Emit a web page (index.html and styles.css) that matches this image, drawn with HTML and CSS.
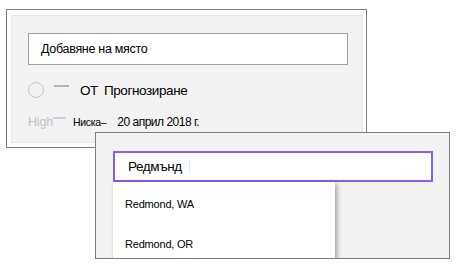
FILE: index.html
```html
<!DOCTYPE html>
<html lang="bg">
<head>
<meta charset="utf-8">
<title>Добавяне на място</title>
<link rel="stylesheet" href="styles.css">
</head>
<body>
<div class="stage">
    <div class="win winBack">
        <div class="winInner">
            <div class="field">Добавяне на място</div>
            <div class="rowMain">
                <span class="ring"></span>
                <span class="dash"></span>
                <span class="label">ОТ</span>
                <span class="label">Прогнозиране</span>
            </div>
            <div class="rowSub">
                <span class="high">High</span>
                <span class="dash dashSmall"></span>
                <span class="low">Ниска–</span>
                <span class="date">20 април 2018 г.</span>
            </div>
        </div>
    </div>

    <div class="win winFront">
        <div class="field fieldActive">Редмънд<span class="caret"></span></div>
        <ul class="menu">
            <li>Redmond, WA</li>
            <li>Redmond, OR</li>
        </ul>
    </div>
</div>
</body>
</html>
```

FILE: styles.css
```css
*{margin:0; padding:0; box-sizing:border-box;}
ul{list-style:none;}
body{background:#fff; font-family:"Liberation Sans", Arial, sans-serif; color:#000;}
.stage{position:relative; width:458px; height:273px; overflow:hidden;}

/* two overlapping dialog windows */
.win{position:absolute; border:1px solid #7d7d7d;}
.winBack{left:6px; top:9px; width:361px; height:139px; background:#fff; padding:5px 3px 4px 4px;}
.winInner{height:100%; background:#f3f3f3; border:1px solid #e6e6e6; padding:17px 0 0 16px;}
.winFront{left:95px; top:132px; width:355px; height:127px; background:#f3f3f3; padding:18px 0 0 17px; overflow:hidden;}

.field{width:320px; height:32px; background:#fff; border:1px solid #a0a0a0; padding:0 0 0 12px; font-size:12.5px; letter-spacing:-0.3px; line-height:30px;}
.fieldActive{height:31px; border:2px solid #8a5cf2; padding-left:13px; font-size:13.5px; letter-spacing:-0.4px; line-height:28px; display:flex; align-items:center;}
.caret{width:1px; height:14px; background:#d6eef5; margin-left:7px;}

.rowMain{display:flex; align-items:center; height:26px; margin-top:12px;}
.ring{width:16px; height:16px; border:1.5px solid #c4c4c4; border-radius:50%;}
.dash{width:15px; height:2px; background:#b4b4b4; margin:0 11px 9px 10px;}
.label{font-size:13.5px; letter-spacing:-0.4px; margin-right:6px;}

.rowSub{display:flex; align-items:center; margin-top:9px; height:20px;}
.high{font-size:12.5px; letter-spacing:-0.2px; color:#c2c2c2;}
.dashSmall{width:13px; margin:0 7px 8px 0; background:#d0d0d0;}
.low{font-size:10.5px; letter-spacing:-0.3px; margin-right:11px;}
.date{font-size:12px; letter-spacing:-0.5px;}

.menu{width:222px; height:100px; background:#fff; box-shadow:2px 2px 5px rgba(0,0,0,.35); font-size:11px; letter-spacing:-0.2px;}
.menu li{height:40px; line-height:44px; padding-left:12px;}
```
